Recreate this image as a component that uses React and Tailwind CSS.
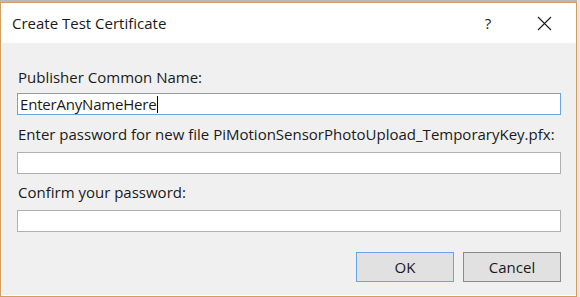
export default function App() {
  // Segoe UI 대용 폰트
  const font = { fontFamily: '"Open Sans", "Noto Sans", sans-serif' };

  return (
    <div className="w-[580px] h-[297px] bg-[#e4e6ea] flex flex-col overflow-hidden" style={font}>
      {/* 뒤쪽 창 가장자리 */}
      <div className="h-[2px] w-[577px] bg-[#b9b9b9] shrink-0" />
      <div className="w-[577px] h-[295px] border border-[#d39d62] flex flex-col shrink-0">
        {/* 제목 표시줄 */}
        <div className="h-[40px] bg-white flex items-center shrink-0">
          <div className="pl-[11px] text-[15px] text-[#1a1a1a] flex-1">
            Create Test Certificate
          </div>
          <div className="w-[58px] text-center text-[15px] text-[#1a1a1a] pr-[2px]">?</div>
          <div className="w-[58px] flex items-center justify-center pr-[6px]">
            <svg width="15" height="15" viewBox="0 0 15 15">
              <path d="M1 1 L14 14 M14 1 L1 14" stroke="#1a1a1a" strokeWidth="1.1" fill="none" />
            </svg>
          </div>
        </div>

        {/* 본문 */}
        <div className="flex-1 bg-[#f0f0f0] border-l border-b border-white px-[15px] pt-[24px] text-[15px] text-[#1a1a1a]">
          <div className="h-[20px] leading-[20px] pl-[1px]">Publisher Common Name:</div>
          <div className="mt-[6px] h-[22px] bg-white border border-[#6aa3e6] flex items-center pl-[2px] text-[15px] tracking-[-0.2px]">
            EnterAnyNameHere
            <span className="w-[1px] h-[17px] bg-black ml-[1px]" />
          </div>

          <div className="mt-[9px] h-[20px] leading-[20px] pl-[1px] whitespace-nowrap">
            Enter password for new file PiMotionSensorPhotoUpload_TemporaryKey.pfx:
          </div>
          <div className="mt-[8px] h-[22px] bg-white border border-[#b0b0b0]" />

          <div className="mt-[8px] h-[20px] leading-[20px] pl-[1px]">Confirm your password:</div>
          <div className="mt-[8px] h-[22px] bg-white border border-[#b0b0b0]" />

          {/* 버튼 */}
          <div className="mt-[20px] flex justify-end gap-[9px]">
            <button className="w-[98px] h-[30px] bg-[#e1e1e1] border border-[#69a4e8] text-[15px] text-[#1a1a1a]">
              OK
            </button>
            <button className="w-[98px] h-[30px] bg-[#e1e1e1] border border-[#8a8a8a] text-[15px] text-[#1a1a1a]">
              Cancel
            </button>
          </div>
        </div>
      </div>
    </div>
  );
}
